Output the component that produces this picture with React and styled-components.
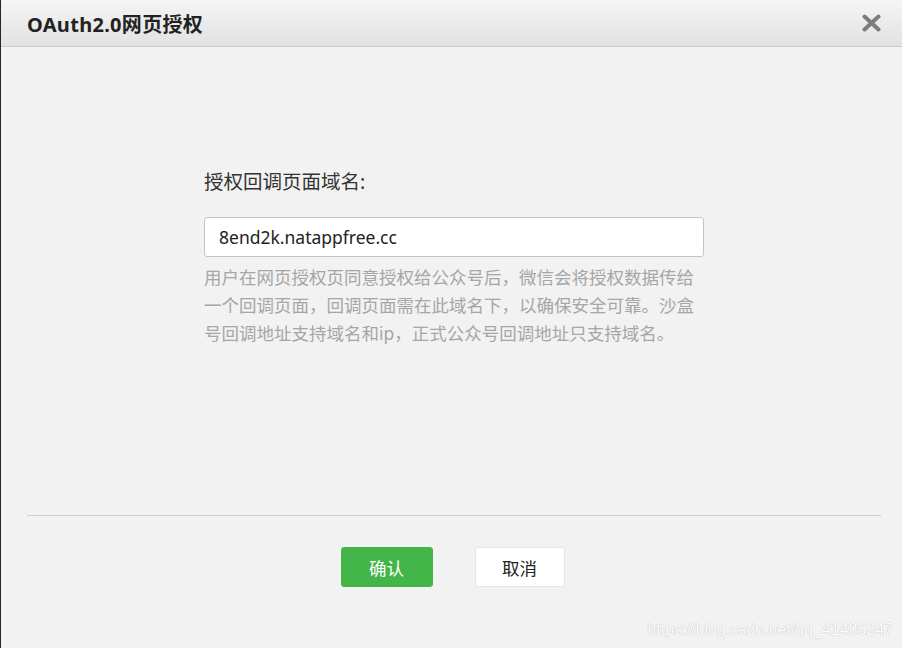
import styled, { createGlobalStyle } from 'styled-components';

const GlobalStyle = createGlobalStyle`
    html, body {
        margin: 0;
        padding: 0;
        background: #f2f2f2;
    }
    body {
        font-family: "Noto Sans", "Noto Sans CJK SC", sans-serif;
    }
`;

const Dialog = styled.div`
    position: relative;
    display: flex;
    flex-direction: column;
    width: 902px;
    height: 648px;
    box-sizing: border-box;
    border-left: 1px solid #262626;
    background: #f2f2f2;
    overflow: hidden;
`;

const Header = styled.div`
    display: flex;
    align-items: center;
    justify-content: space-between;
    height: 46px;
    padding: 0 21px 0 26px;
    background: linear-gradient(#f5f5f5, #e2e2e2);
    border-bottom: 1px solid #c9c9c9;
`;

const Title = styled.h3`
    margin: 0;
    font-size: 20px;
    font-weight: 700;
    color: #222;
    letter-spacing: 0.3px;
`;

const CloseButton = styled.button`
    display: flex;
    align-items: center;
    justify-content: center;
    width: 20px;
    height: 20px;
    padding: 0;
    border: none;
    background: none;
    cursor: pointer;
`;

const Body = styled.div`
    flex: 1;
    display: flex;
    justify-content: center;
    padding: 121px 0 0 5px;
`;

const Form = styled.div`
    width: 500px;
`;

const Label = styled.div`
    font-size: 19.5px;
    line-height: 28px;
    color: #333;
    margin-bottom: 21px;
`;

const Input = styled.input`
    display: block;
    width: 100%;
    height: 40px;
    box-sizing: border-box;
    padding: 0 14px;
    border: 1px solid #c4c4c4;
    border-radius: 3px;
    background: #fff;
    font-family: "Noto Sans", "Noto Sans CJK SC", sans-serif;
    font-size: 17.5px;
    color: #222;
    outline: none;
`;

const Tip = styled.p`
    width: 490px;
    margin: 6px 0 0;
    font-size: 17.5px;
    line-height: 28px;
    color: #a6a6a6;
`;

const Footer = styled.div`
    height: 133px;
    margin: 0 21px 0 26px;
    border-top: 1px solid #cfcfcf;
    display: flex;
    justify-content: center;
    align-items: flex-start;
    gap: 42px;
    padding: 31px 3px 0 0;
    box-sizing: border-box;
`;

const Button = styled.button`
    width: ${(p) => (p.primary ? '92px' : '90px')};
    height: 40px;
    border-radius: 3px;
    border: 1px solid ${(p) => (p.primary ? '#44b549' : '#e3e6e9')};
    background: ${(p) => (p.primary ? '#44b549' : '#fff')};
    color: ${(p) => (p.primary ? '#fff' : '#222')};
    font-family: "Noto Sans", "Noto Sans CJK SC", sans-serif;
    font-size: 17.5px;
    cursor: pointer;
`;

const Watermark = styled.div`
    position: absolute;
    right: 9px;
    bottom: 9px;
    font-family: "Liberation Sans", Arial, sans-serif;
    font-size: 16px;
    color: #fdfdfd;
    text-shadow: 0 0 1px #c4c4c4, 0 0 1px #c4c4c4;
    pointer-events: none;
`;

const CloseIcon = () => (
    <svg width="19" height="18" viewBox="0 0 19 18">
        <path d="M2.5 2.5 L16.5 15.5 M16.5 2.5 L2.5 15.5" stroke="#7c7c7c" strokeWidth="4" strokeLinecap="round" />
    </svg>
);

const App = () => {
    return (
        <>
            <GlobalStyle />
            <Dialog>
                <Header>
                    <Title>OAuth2.0网页授权</Title>
                    <CloseButton aria-label="close">
                        <CloseIcon />
                    </CloseButton>
                </Header>
                <Body>
                    <Form>
                        <Label>授权回调页面域名:</Label>
                        <Input defaultValue="8end2k.natappfree.cc" />
                        <Tip>
                            用户在网页授权页同意授权给公众号后，微信会将授权数据传给一个回调页面，回调页面需在此域名下，以确保安全可靠。沙盒号回调地址支持域名和ip，正式公众号回调地址只支持域名。
                        </Tip>
                    </Form>
                </Body>
                <Footer>
                    <Button primary>确认</Button>
                    <Button>取消</Button>
                </Footer>
                <Watermark>https://blog.csdn.net/qq_41486247</Watermark>
            </Dialog>
        </>
    );
};

export default App;
